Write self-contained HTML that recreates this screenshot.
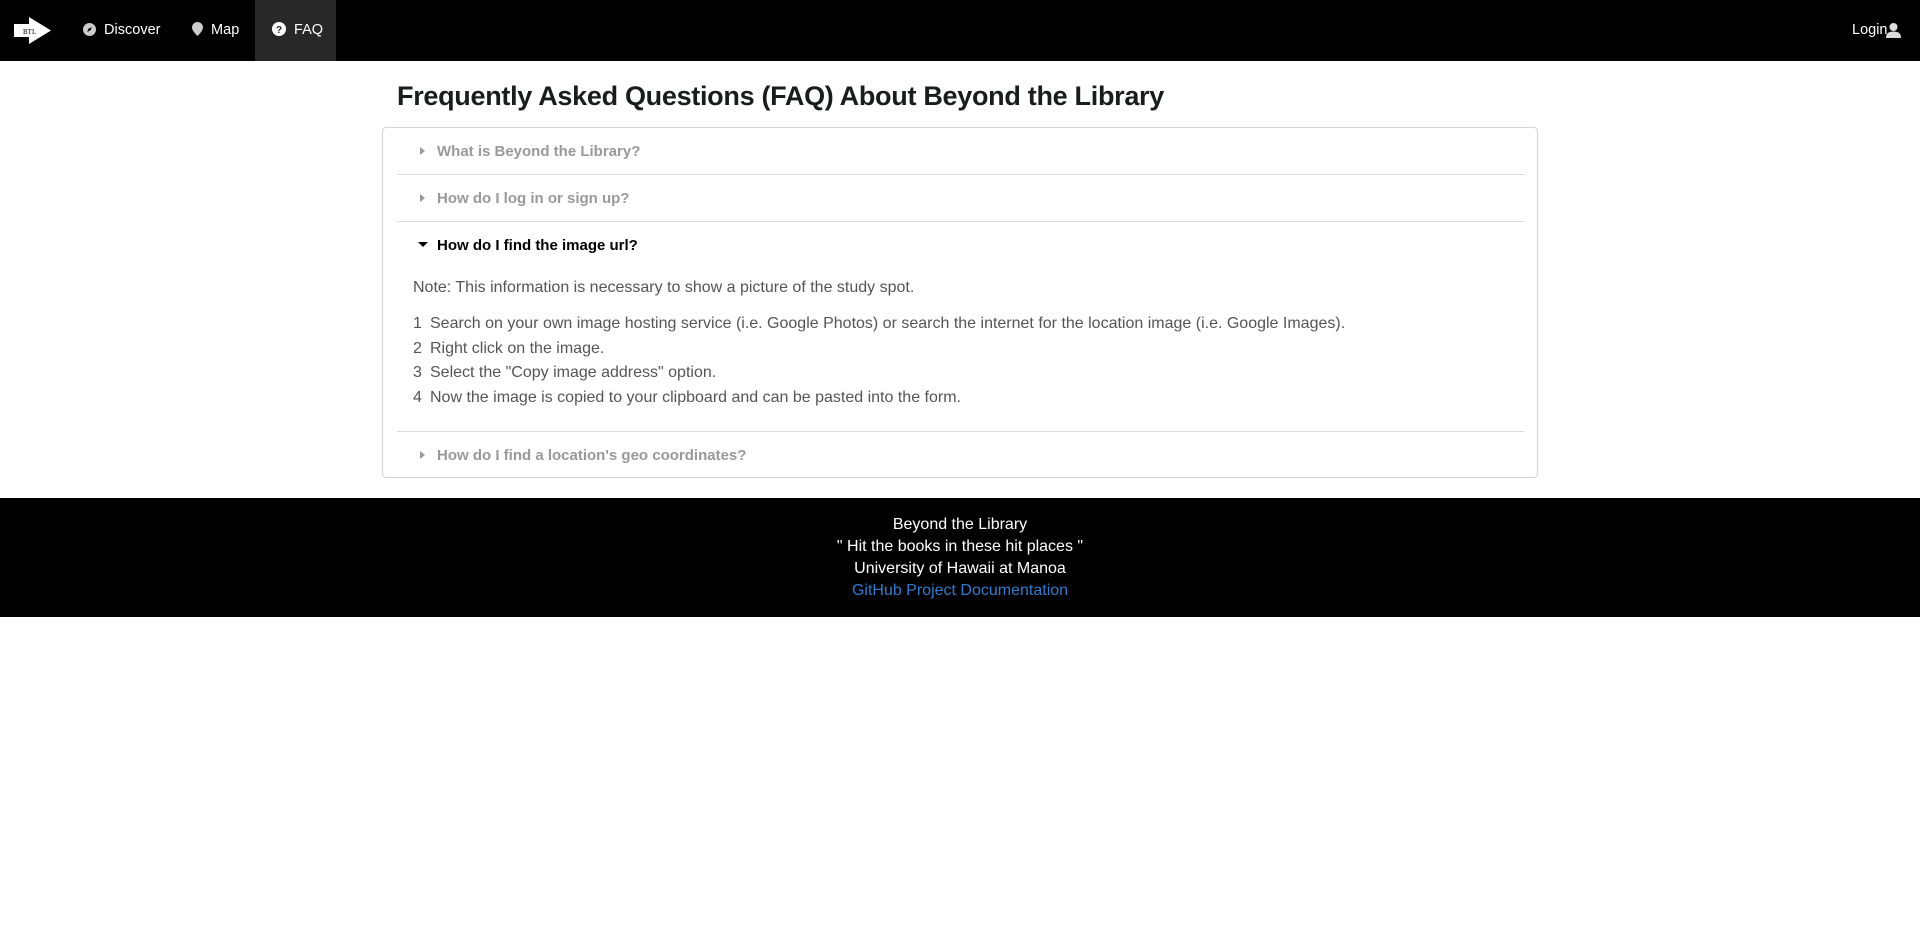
<!DOCTYPE html>
<html><head><meta charset="utf-8"><style>
*{margin:0;padding:0;box-sizing:border-box}
body{width:1920px;height:937px;background:#fff;font-family:"Liberation Sans",sans-serif;position:relative;overflow:hidden}
.nav{position:absolute;left:0;top:0;width:1920px;height:61px;background:#000;color:#fff;font-size:14.5px}
.nav .it{position:absolute;top:0;height:61px;line-height:61px}
.faq{left:255px;width:81px;background:#282828}
h1{position:absolute;left:397px;top:81px;font-size:27px;font-weight:bold;color:#1b1c1d;letter-spacing:-0.3px}
.panel{position:absolute;left:382px;top:127px;width:1156px;height:351px;border:1px solid #d4d4d5;border-radius:4px}
.sep{position:absolute;left:14px;width:1128px;height:1px;background:#dcdcdc}
.q{position:absolute;left:54px;font-size:15px;font-weight:bold;color:#999}
.ar{position:absolute;left:37px;width:0;height:0;border-top:4px solid transparent;border-bottom:4px solid transparent;border-left:5px solid #999}
.ad{position:absolute;left:35px;width:0;height:0;border-left:5px solid transparent;border-right:5px solid transparent;border-top:5px solid #000}
.t{position:absolute;font-size:16px;color:#555;white-space:nowrap}
.t b{display:inline-block;width:17px;font-weight:normal}
.foot{position:absolute;left:0;top:498px;width:1920px;height:119px;background:#000;color:#fff;text-align:center;font-size:16px;line-height:22px;padding-top:16px}
</style></head><body>
<div class="nav">
<svg style="position:absolute;left:14px;top:17px" width="38" height="27" viewBox="0 0 38 27"><path d="M0 7H15V0L37 13.5L15 27V20H0Z" fill="#fff"/><text x="9" y="17" font-size="7" font-family="Liberation Serif" fill="#000">BTL</text></svg>
<div class="it" style="left:83px"><svg style="vertical-align:-2px" width="13" height="13" viewBox="0 0 14 14"><circle cx="7" cy="7" r="7" fill="#ccc"/><path d="M9.5 4.5L8 8L4.5 9.5L6 6Z" fill="#000"/></svg>&nbsp; Discover</div>
<div class="it" style="left:192px"><svg style="vertical-align:-2px" width="11" height="14" viewBox="0 0 11 14"><path d="M5.5 0A5.5 5.5 0 0 1 11 5.5C11 9 5.5 14 5.5 14S0 9 0 5.5A5.5 5.5 0 0 1 5.5 0Z" fill="#ccc"/></svg>&nbsp; Map</div>
<div class="it faq"><span style="position:absolute;left:17px"><svg style="vertical-align:-2px" width="14" height="14" viewBox="0 0 14 14"><circle cx="7" cy="7" r="7" fill="#fff"/><text x="7" y="11" text-anchor="middle" font-size="10" font-weight="bold" fill="#282828" font-family="Liberation Sans">?</text></svg>&nbsp; FAQ</span></div>
<div class="it" style="left:1852px">Login</div>
<svg style="position:absolute;left:1886px;top:23px" width="15" height="15" viewBox="0 0 15 15"><circle cx="7.5" cy="4" r="4" fill="#ddd"/><path d="M0 15C0 10 3 8.5 7.5 8.5S15 10 15 15Z" fill="#ddd"/></svg>
</div>
<h1>Frequently Asked Questions (FAQ) About Beyond the Library</h1>
<div class="panel">
<div class="ar" style="top:19px"></div><div class="q" style="top:15px">What is Beyond the Library?</div>
<div class="sep" style="top:46px"></div>
<div class="ar" style="top:66px"></div><div class="q" style="top:62px">How do I log in or sign up?</div>
<div class="sep" style="top:93px"></div>
<div class="ad" style="top:114px"></div><div class="q" style="top:109px;color:#000">How do I find the image url?</div>
<div class="t" style="left:30px;top:151px">Note: This information is necessary to show a picture of the study spot.</div>
<div class="t" style="left:30px;top:187px"><b>1</b>Search on your own image hosting service (i.e. Google Photos) or search the internet for the location image (i.e. Google Images).</div>
<div class="t" style="left:30px;top:212px"><b>2</b>Right click on the image.</div>
<div class="t" style="left:30px;top:236px"><b>3</b>Select the "Copy image address" option.</div>
<div class="t" style="left:30px;top:261px"><b>4</b>Now the image is copied to your clipboard and can be pasted into the form.</div>
<div class="sep" style="top:303px"></div>
<div class="ar" style="top:323px"></div><div class="q" style="top:319px">How do I find a location's geo coordinates?</div>
</div>
<div class="foot">Beyond the Library<br>" Hit the books in these hit places "<br>University of Hawaii at Manoa<br><span style="color:#2f7bd0">GitHub Project Documentation</span></div>
</body></html>
